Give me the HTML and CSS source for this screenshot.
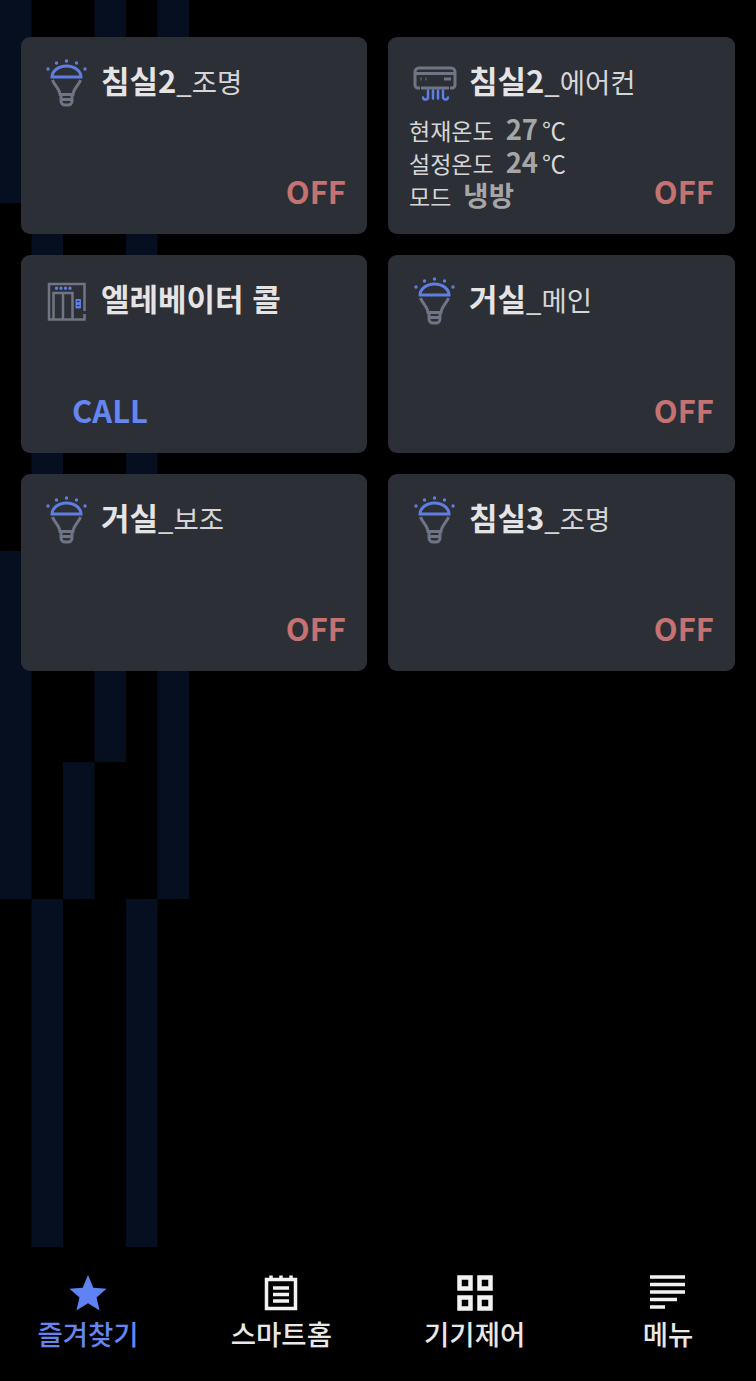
FILE: index.html
```html
<!DOCTYPE html>
<html lang="ko">
<head>
<meta charset="utf-8">
<title>즐겨찾기</title>
<link rel="stylesheet" href="styles.css">
</head>
<body>
<div class="app">
  <!-- decorative wallpaper columns behind the cards -->
  <svg class="wallpaper" width="189" height="1247" viewBox="0 0 189 1247" aria-hidden="true">
    <rect x="0" y="0" width="31.5" height="203"/>
    <rect x="0" y="551" width="31.5" height="348"/>
    <rect x="31.5" y="203" width="31.5" height="348"/>
    <rect x="31.5" y="899" width="31.5" height="348"/>
    <rect x="63" y="762" width="31.5" height="137"/>
    <rect x="94.5" y="0" width="31.5" height="203"/>
    <rect x="94.5" y="551" width="31.5" height="211"/>
    <rect x="126" y="203" width="31.5" height="348"/>
    <rect x="126" y="899" width="31.5" height="348"/>
    <rect x="157.5" y="0" width="31.5" height="203"/>
    <rect x="157.5" y="551" width="31.5" height="348"/>
  </svg>

  <main class="grid">
    <section class="card">
      <header class="head">
        <svg class="icon icon-bulb" width="44" height="48" viewBox="0 0 44 48"><use href="#bulb"/></svg>
        <h2 class="title">침실2<span class="sub">_조명</span></h2>
      </header>
      <div class="foot"><span class="state off">OFF</span></div>
    </section>

    <section class="card">
      <header class="head">
        <svg class="icon icon-ac" width="48" height="40" viewBox="0 0 48 40">
          <path class="line-gray" d="M7 22H5a3 3 0 0 1-3-3V6a4 4 0 0 1 4-4h32a4 4 0 0 1 4 4v13a3 3 0 0 1-3 3h-2M2 7.500h40M8 22h28"/>
          <path class="line-gray" d="M7.500 13h1M12.500 13h1M31 13h7"/>
          <path class="line-blue vent" d="M15 24.500v6a2.500 2.500 0 0 1-5 1M20 24.500v8M25 24.500v8M30 24.500v6a2.500 2.500 0 0 0 5 1"/>
        </svg>
        <h2 class="title">침실2<span class="sub">_에어컨</span></h2>
      </header>
      <div class="foot foot-ac">
        <dl class="readings">
          <div class="reading"><dt>현재온도</dt><dd>27</dd><span class="unit">℃</span></div>
          <div class="reading"><dt>설정온도</dt><dd>24</dd><span class="unit">℃</span></div>
          <div class="reading"><dt>모드</dt><dd>냉방</dd></div>
        </dl>
        <span class="state off">OFF</span>
      </div>
    </section>

    <section class="card">
      <header class="head">
        <svg class="icon icon-lift" width="44" height="44" viewBox="0 0 44 44">
          <path class="line-gray thin" d="M37.500 32V5H2v35.500h35.500V35"/>
          <path class="line-gray thin" d="M6.500 40.500V14h19v26.500M16 14v26.500"/>
          <path class="line-blue dots" d="M9.500 9.200h.01M14 9.200h.01M18.500 9.200h.01M23 9.200h.01"/>
          <rect class="panel" x="28.500" y="20" width="5.500" height="9.500" rx="1"/>
          <path class="panel-mark" d="M30 22.500h2.500M30 26.500h2.500"/>
        </svg>
        <h2 class="title">엘레베이터 콜</h2>
      </header>
      <div class="foot foot-start"><span class="state on">CALL</span></div>
    </section>

    <section class="card">
      <header class="head">
        <svg class="icon icon-bulb" width="44" height="48" viewBox="0 0 44 48"><use href="#bulb"/></svg>
        <h2 class="title">거실<span class="sub">_메인</span></h2>
      </header>
      <div class="foot"><span class="state off">OFF</span></div>
    </section>

    <section class="card">
      <header class="head">
        <svg class="icon icon-bulb" width="44" height="48" viewBox="0 0 44 48"><use href="#bulb"/></svg>
        <h2 class="title">거실<span class="sub">_보조</span></h2>
      </header>
      <div class="foot"><span class="state off">OFF</span></div>
    </section>

    <section class="card">
      <header class="head">
        <svg class="icon icon-bulb" width="44" height="48" viewBox="0 0 44 48"><use href="#bulb"/></svg>
        <h2 class="title">침실3<span class="sub">_조명</span></h2>
      </header>
      <div class="foot"><span class="state off">OFF</span></div>
    </section>
  </main>

  <nav class="tabs">
    <a class="tab active">
      <svg width="38" height="38" viewBox="0 0 38 38"><path class="star" d="M19 1l5.300 12.700 13.200 1-10 8.700 3.100 13.100L19 29.300 7.400 36.500l3.100-13.100-10-8.700 13.200-1z"/></svg>
      <span>즐겨찾기</span>
    </a>
    <a class="tab">
      <svg width="38" height="38" viewBox="0 0 38 38"><path class="tab-line" d="M4.500 5.500h29v29h-29zM9 1.500v4M19 1.500v4M29 1.500v4M11 14h16M11 20.500h16M11 27h16"/></svg>
      <span>스마트홈</span>
    </a>
    <a class="tab">
      <svg width="38" height="38" viewBox="0 0 38 38"><path class="tab-line thick" d="M3.500 3.500h11v11h-11zM23.500 3.500h11v11h-11zM3.500 23.500h11v11h-11zM23.500 23.500h11v11h-11z"/></svg>
      <span>기기제어</span>
    </a>
    <a class="tab">
      <svg width="38" height="38" viewBox="0 0 38 38"><path class="tab-line" d="M1 3h35M1 10.500h35M1 18h35M1 25.500h27M1 33h15"/></svg>
      <span>메뉴</span>
    </a>
  </nav>
</div>

<!-- shared light bulb symbol -->
<svg class="defs" width="0" height="0" aria-hidden="true">
  <symbol id="bulb" viewBox="0 0 44 48">
    <path class="line-gray" d="M7.500 21c1.500 5 7 8.500 7.500 14.500h13c.5-6 6-9.500 7.500-14.500"/>
    <path class="line-gray" d="M16 35.500v6.500a4 4 0 0 0 4 4h3a4 4 0 0 0 4-4v-6.500M16.500 40.500h10"/>
    <path class="line-blue" d="M7 18a14.500 11 0 0 1 29 0zM7 18h29"/>
    <path class="line-blue dots" d="M3 10h.01M11.500 4h.01M21.500 2h.01M31.500 4h.01M40 10h.01"/>
  </symbol>
</svg>
</body>
</html>
```
FILE: styles.css
```css
* { box-sizing: border-box; margin: 0; padding: 0; }

html, body { background: #000; }

body {
  font-family: "Noto Sans CJK KR", "Noto Sans", sans-serif;
  color: #e6e6e6;
}

.app {
  position: relative;
  width: 756px;
  height: 1381px;
  display: flex;
  flex-direction: column;
  overflow: hidden;
}

.wallpaper {
  position: absolute;
  top: 0;
  left: 0;
  fill: #060f20;
}

.defs { position: absolute; }

.grid {
  position: relative;
  flex: 1;
  min-height: 0;
  display: grid;
  grid-template-columns: 346px 347px;
  grid-auto-rows: 197.33px;
  gap: 21px;
  align-content: start;
  padding: 37px 21px 0;
}

.card {
  display: flex;
  flex-direction: column;
  justify-content: space-between;
  background: #2d2f36;
  border-radius: 9px;
  padding: 21px 21px 24px 24px;
}

.card:nth-child(even) { padding-left: 25px; }

.head {
  display: grid;
  grid-template-columns: 56px 1fr;
  align-items: start;
  height: 50px;
}

.icon { justify-self: start; }
.icon-bulb { margin-top: 1px; }
.icon-ac { margin-top: 8px; }
.icon-lift { margin: 3px 0 0 2px; }

.title {
  font-size: 31px;
  font-weight: 700;
  line-height: 44px;
  white-space: nowrap;
  color: #e4e4e4;
}

.sub {
  font-size: 27.5px;
  font-weight: 400;
  color: #d6d6d6;
}

.foot {
  display: flex;
  justify-content: flex-end;
  align-items: flex-end;
}

.foot-start {
  justify-content: flex-start;
  padding-left: 27px;
}

.foot-ac {
  justify-content: space-between;
  margin: 0 0 -1px -4px;
}

.foot-ac .state { margin-bottom: 1px; }

.state {
  font-size: 31px;
  font-weight: 700;
  line-height: 38px;
}

.off { color: #c47272; }
.on { color: #6486ee; }

.reading {
  display: flex;
  align-items: baseline;
  height: 33px;
  line-height: 33px;
}

.reading dt {
  font-size: 23px;
  color: #d6d6d6;
  margin-right: 12px;
}

.reading dd {
  font-size: 27.5px;
  font-weight: 700;
  color: #a6a6a6;
  margin-right: 4px;
}

.unit {
  font-size: 24px;
  color: #d6d6d6;
}

.tabs {
  position: relative;
  flex: 0 0 134px;
  display: flex;
  justify-content: space-between;
  padding: 27px 38px 0;
  background: #000;
}

.tab {
  width: 100px;
  display: flex;
  flex-direction: column;
  align-items: center;
  font-size: 27.5px;
  font-weight: 500;
  line-height: 43px;
  white-space: nowrap;
  color: #e8e8e8;
}

.tab svg { flex: none; }
.tab.active { color: #6486ee; }

.star { fill: #5f83f5; }

.line-gray, .line-blue, .tab-line, .panel-mark {
  fill: none;
  stroke-width: 3;
}

.line-gray { stroke: #6f7584; }
.line-blue { stroke: #5f7fe0; }
.vent { stroke-width: 2.5px; stroke-linecap: round; }
.tab-line { stroke: #f2f2f2; stroke-width: 3.5px; }
.tab-line.thick { stroke-width: 4.5px; }
.thin { stroke-width: 2.5px; }
.dots { stroke-linecap: round; stroke-width: 3.4px; }
.panel { fill: #5f7fe0; }
.panel-mark { stroke: #2d2f36; stroke-width: 1.2px; }
```
